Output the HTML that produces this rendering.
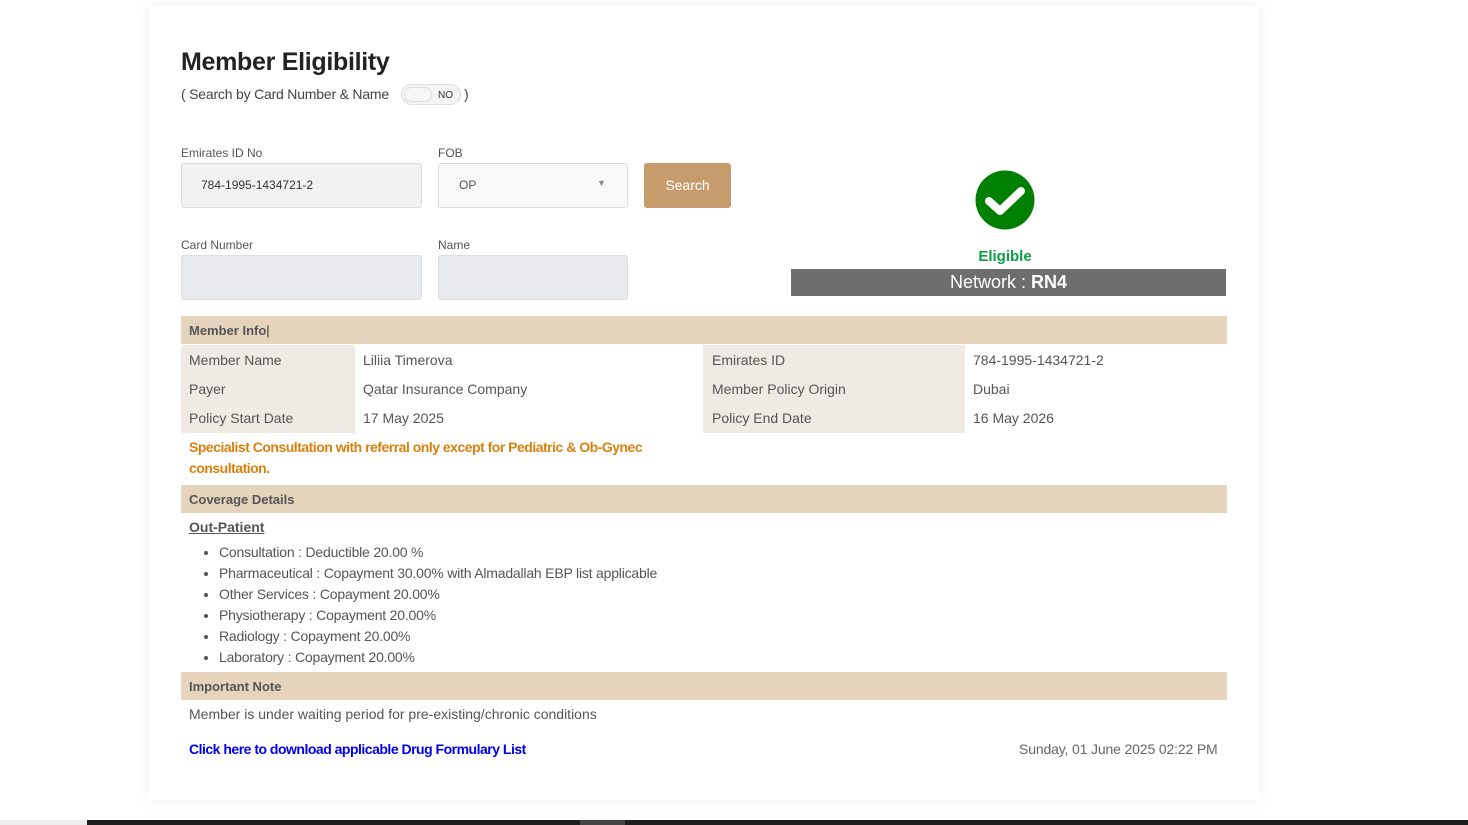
<!DOCTYPE html>
<html><head><meta charset="utf-8"><style>
*{margin:0;padding:0;box-sizing:border-box}
body{width:1468px;height:825px;background:#fff;position:relative;overflow:hidden;font-family:"Liberation Sans",sans-serif;color:#555}
.a{position:absolute;white-space:nowrap}
.card{position:absolute;left:149px;top:6px;width:1110px;height:794px;background:#fff;box-shadow:0 0 18px rgba(0,0,0,.06)}
.lbl{font-size:12px;color:#555}
.inp{position:absolute;border:1px solid #ddd;border-radius:3px}
.bar{position:absolute;left:181px;width:1046px;height:28px;background:#e5d4bb;font-size:13px;font-weight:bold;color:#555;padding:7px 8px}
.t{font-size:14px;color:#555}
.cell{position:absolute;background:#efebe4}
li{font-size:14px;height:21px;line-height:21px;letter-spacing:-0.2px}
</style></head><body>
<div class="card"></div>
<div class="a" style="left:181px;top:48px;font-size:25px;font-weight:bold;color:#222;letter-spacing:-0.3px">Member Eligibility</div>
<div class="a" style="left:181px;top:86px;font-size:14px;color:#444;letter-spacing:-0.2px">( Search by Card Number &amp; Name</div>
<div class="a" style="left:401px;top:84px;width:60px;height:21px;border:1px solid #ddd;border-radius:11px;background:#f4f4f4"></div>
<div class="a" style="left:404px;top:87px;width:28px;height:15px;border:1px solid #ddd;border-radius:8px;background:#f7f7f7"></div>
<div class="a" style="left:438px;top:90px;font-size:10px;color:#333">NO</div>
<div class="a" style="left:464px;top:86px;font-size:14px;color:#444">)</div>

<div class="a lbl" style="left:181px;top:146px">Emirates ID No</div>
<div class="inp" style="left:181px;top:163px;width:241px;height:45px;background:#f2f2f2"></div>
<div class="a" style="left:201px;top:178px;font-size:12px;color:#333">784-1995-1434721-2</div>
<div class="a lbl" style="left:438px;top:146px">FOB</div>
<div class="inp" style="left:438px;top:163px;width:190px;height:45px;background:#f8f8f8"></div>
<div class="a" style="left:459px;top:178px;font-size:12px;color:#555">OP</div>
<div class="a" style="left:597px;top:178px;font-size:9px;color:#888">&#9660;</div>
<div class="a" style="left:644px;top:163px;width:87px;height:45px;background:#c69c6d;border-radius:3px;color:#fff;font-size:14px;text-align:center;line-height:44px">Search</div>

<div class="a lbl" style="left:181px;top:238px">Card Number</div>
<div class="inp" style="left:181px;top:255px;width:241px;height:45px;background:#e8eaed"></div>
<div class="a lbl" style="left:438px;top:238px">Name</div>
<div class="inp" style="left:438px;top:255px;width:190px;height:45px;background:#e8eaed"></div>

<svg class="a" style="left:975px;top:170px" width="60" height="60" viewBox="0 0 60 60"><circle cx="30" cy="30" r="29.5" fill="#008000"/><path d="M14 31 L25 41 L46 21" stroke="#fff" stroke-width="8" fill="none" stroke-linecap="round" stroke-linejoin="round"/></svg>
<div class="a" style="left:945px;top:248px;width:120px;text-align:center;font-size:15px;font-weight:bold;color:#0a9e45">Eligible</div>
<div class="a" style="left:791px;top:269px;width:435px;height:27px;background:#6e6e6e;color:#fff;font-size:18px;text-align:center;line-height:27px">Network : <b>RN4</b></div>

<div class="bar" style="top:316px">Member Info<span style="font-weight:normal;color:#333">|</span></div>
<div class="cell" style="left:181px;top:345px;width:174px;height:88px"></div>
<div class="cell" style="left:703px;top:345px;width:262px;height:88px"></div>
<div class="a t" style="left:189px;top:352px">Member Name</div>
<div class="a t" style="left:363px;top:352px">Liliia Timerova</div>
<div class="a t" style="left:712px;top:352px">Emirates ID</div>
<div class="a t" style="left:973px;top:352px">784-1995-1434721-2</div>
<div class="a t" style="left:189px;top:381px">Payer</div>
<div class="a t" style="left:363px;top:381px">Qatar Insurance Company</div>
<div class="a t" style="left:712px;top:381px">Member Policy Origin</div>
<div class="a t" style="left:973px;top:381px">Dubai</div>
<div class="a t" style="left:189px;top:410px">Policy Start Date</div>
<div class="a t" style="left:363px;top:410px">17 May 2025</div>
<div class="a t" style="left:712px;top:410px">Policy End Date</div>
<div class="a t" style="left:973px;top:410px">16 May 2026</div>
<div class="a" style="left:189px;top:437px;font-size:14px;font-weight:bold;color:#d9800f;line-height:21px;letter-spacing:-0.5px">Specialist Consultation with referral only except for Pediatric &amp; Ob-Gynec<br>consultation.</div>

<div class="bar" style="top:485px">Coverage Details</div>
<div class="a" style="left:189px;top:519px;font-size:14px;font-weight:bold;text-decoration:underline;color:#555">Out-Patient</div>
<ul class="a" style="left:219px;top:542px;list-style:disc;color:#555">
<li>Consultation : Deductible 20.00 %</li>
<li>Pharmaceutical : Copayment 30.00% with Almadallah EBP list applicable</li>
<li>Other Services : Copayment 20.00%</li>
<li>Physiotherapy : Copayment 20.00%</li>
<li>Radiology : Copayment 20.00%</li>
<li>Laboratory : Copayment 20.00%</li>
</ul>
<div class="bar" style="top:672px">Important Note</div>
<div class="a t" style="left:189px;top:706px">Member is under waiting period for pre-existing/chronic conditions</div>
<div class="a" style="left:189px;top:741px;font-size:14px;font-weight:bold;color:#0000ee;letter-spacing:-0.5px">Click here to download applicable Drug Formulary List</div>
<div class="a t" style="left:1019px;top:741px;color:#666;letter-spacing:-0.15px">Sunday, 01 June 2025 02:22 PM</div>

<div class="a" style="left:0;top:820px;width:87px;height:5px;background:#eee"></div>
<div class="a" style="left:87px;top:820px;width:1381px;height:5px;background:#1e1e1e"></div>
<div class="a" style="left:580px;top:820px;width:45px;height:5px;background:#444"></div>
</body></html>
